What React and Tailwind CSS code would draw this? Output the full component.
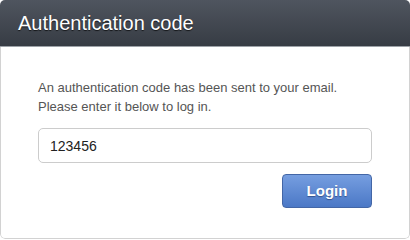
import React, { useState } from "react";

const App = () => {
  const [code, setCode] = useState("123456");

  return (
    <div className="w-[410px] h-[239px] bg-white font-['Liberation_Sans',Arial,sans-serif]">
      <div className="flex flex-col w-[410px] h-[239px] rounded-[5px] overflow-hidden">
        {/* Header */}
        <div className="flex items-center h-[47px] px-[18px] bg-gradient-to-b from-[#4f555f] to-[#373c44] border-b border-[#9da2a8]">
          <h1 className="text-[20px] leading-[23px] text-white [text-shadow:0_1px_1px_rgba(0,0,0,0.7)]">
            Authentication code
          </h1>
        </div>

        {/* Body */}
        <div className="flex flex-col flex-1 px-[37px] pt-[31px] border-x border-b border-[#d2d2d2] rounded-b-[5px]">
          <p className="text-[13px] leading-[19px] text-[#555]">
            An authentication code has been sent to your email.
            <br />
            Please enter it below to log in.
          </p>
          <input
            type="text"
            value={code}
            onChange={(e) => setCode(e.target.value)}
            className="mt-[12px] h-[35px] w-full px-[11px] text-[14px] text-[#222] bg-white border border-[#cccccc] rounded-[5px] outline-none"
          />
          <div className="flex justify-end mt-[11px]">
            <button className="w-[90px] h-[34px] rounded-[4px] border border-[#4366a6] bg-gradient-to-b from-[#769ee0] to-[#4b78c6] text-white text-[15px] font-bold [text-shadow:0_1px_1px_rgba(30,50,100,0.6)]">
              Login
            </button>
          </div>
        </div>
      </div>
    </div>
  );
};

export default App;
